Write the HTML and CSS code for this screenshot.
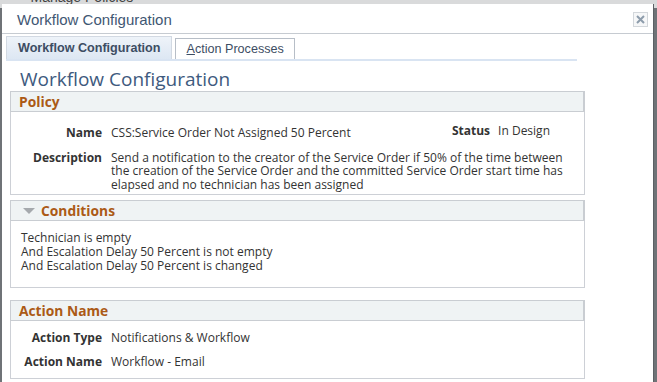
FILE: index.html
```html
<!DOCTYPE html>
<html lang="en">
<head>
  <meta charset="UTF-8">
  <title>Workflow Configuration</title>
  <link rel="stylesheet" href="styles.css">
</head>
<body>

  <div class="backdrop">
    <span class="back-link">- Manage Policies</span>
  </div>

  <div class="dialog">
    <div class="titlebar">
      <span class="title">Workflow Configuration</span>
      <span class="close">
        <svg width="9" height="9" viewBox="0 0 9 9"><path d="M1 1 L8 8 M8 1 L1 8" stroke="#8d9cab" stroke-width="2"/></svg>
      </span>
    </div>

    <div class="tabs">
      <div class="tab active">Workflow Configuration</div>
      <div class="tab"><u>A</u>ction Processes</div>
    </div>

    <h1 class="page-title">Workflow Configuration</h1>

    <div class="section policy">
      <div class="section-head">Policy</div>
      <div class="section-body form">
        <div class="label">Name</div>
        <div class="value name-row">
          <span>CSS:Service Order Not Assigned 50 Percent</span>
          <span class="status"><b>Status</b>In Design</span>
        </div>
        <div class="label">Description</div>
        <div class="value desc">Send a notification to the creator of the Service Order if 50% of the time between the creation of the Service Order and the committed Service Order start time has elapsed and no technician has been assigned</div>
      </div>
    </div>

    <div class="section">
      <div class="section-head"><span class="arrow"></span>Conditions</div>
      <div class="section-body conditions">
        <div>Technician is empty</div>
        <div>And Escalation Delay 50 Percent is not empty</div>
        <div>And Escalation Delay 50 Percent is changed</div>
      </div>
    </div>

    <div class="section">
      <div class="section-head">Action Name</div>
      <div class="section-body form actions">
        <div class="label">Action Type</div>
        <div class="value">Notifications &amp; Workflow</div>
        <div class="label">Action Name</div>
        <div class="value">Workflow - Email</div>
      </div>
    </div>
  </div>

</body>
</html>
```

FILE: styles.css
```css
body {
  margin: 0;
  height: 382px;
  background: #6f7377;
  font-family: "Open Sans", "Noto Sans", sans-serif;
  font-size: 12px;
  color: #333;
  overflow: hidden;
}
.backdrop {
  position: absolute;
  top: 0;
  left: 0;
  right: 0;
  height: 8px;
  background: #d9dadb;
  overflow: hidden;
}
.back-link {
  position: absolute;
  left: 22px;
  top: -11px;
  font-family: "Liberation Sans", sans-serif;
  font-size: 14px;
  color: #444;
}
.dialog {
  position: relative;
  margin: 4px 3px 0 2px;
  height: 378px;
  background: #fff;
  border-right: 1px solid #5c6064;
}
.titlebar {
  height: 29px;
  border-bottom: 1px solid #c6cbd1;
  display: flex;
  align-items: center;
  justify-content: space-between;
  padding: 0 5px 0 15px;
}
.title {
  font-family: "Liberation Sans", sans-serif;
  font-size: 15px;
  color: #3f5773;
  margin-top: 2px;
}
.close {
  width: 13px;
  height: 13px;
  border: 1px solid #d3d7db;
  background: #f6f7f8;
  display: flex;
  align-items: center;
  justify-content: center;
  margin-top: 1px;
}
.tabs {
  display: flex;
  align-items: flex-end;
  gap: 3px;
  margin: 2px 0 0 4px;
  width: 571px;
  border-bottom: 2px solid #d9e4f2;
}
.tab {
  font-family: "Liberation Sans", sans-serif;
  font-size: 12.6px;
  color: #3d4d63;
  padding: 3px 10px 2px 10px;
  height: 15px;
  border: 1px solid #b7bec7;
  border-bottom: none;
  background: #fff;
}
.tab.active {
  font-weight: bold;
  height: 17px;
  padding: 4px 11px 1px 11px;
  border-color: #d2d9e2;
  background: linear-gradient(#eef3f9, #dde7f3);
}
.page-title {
  font-weight: normal;
  font-size: 19px;
  color: #3e5a7e;
  margin: 6px 0 0 18px;
  line-height: 24px;
}
.section {
  margin: 0 68px 12px 8px;
}
.section.policy {
  margin-bottom: 5px;
}
.section-head {
  height: 19px;
  line-height: 19px;
  background: #eff3f4;
  border: 1px solid #c9cdd2;
  border-right-width: 2px;
  padding-left: 8px;
  font-weight: bold;
  font-size: 13.8px;
  color: #ab5a16;
  display: flex;
  align-items: center;
}
.arrow {
  width: 0;
  height: 0;
  border-left: 6px solid transparent;
  border-right: 6px solid transparent;
  border-top: 6px solid #a5a9ad;
  margin: 0 6px 0 4px;
}
.section-body {
  border: 1px solid #cdd0d6;
  border-top: none;
}
.form {
  display: grid;
  grid-template-columns: 91px 1fr;
  column-gap: 9px;
  row-gap: 11px;
  padding: 14px 8px 3px 0;
  line-height: 13.5px;
}
.label {
  text-align: right;
  font-weight: bold;
}
.name-row {
  display: flex;
  justify-content: space-between;
}
.status {
  margin-right: 26px;
  margin-top: -2px;
}
.status b {
  margin-right: 8px;
}
.conditions {
  padding: 10px 10px 14px 10px;
  line-height: 14px;
}
.actions {
  padding: 10px 8px 9px 0;
  row-gap: 10.5px;
}
```
